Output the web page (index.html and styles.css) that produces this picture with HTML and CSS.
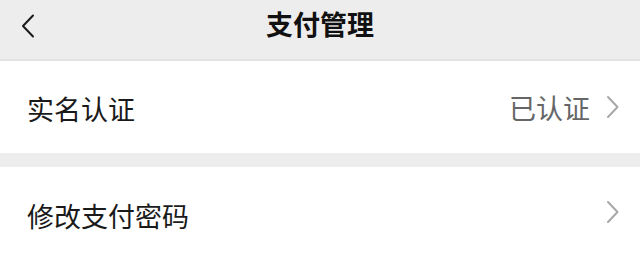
FILE: index.html
```html
<!DOCTYPE html>
<html lang="zh-CN">
<head>
<meta charset="utf-8">
<title>支付管理</title>
<link rel="stylesheet" href="styles.css">
</head>
<body>
<div class="page">
  <header class="nav">
    <span class="back">
      <svg width="14" height="24" viewBox="0 0 14 24"><path d="M12 1.5 L2 12 L12 22.5" fill="none" stroke="#1a1a1a" stroke-width="2" stroke-linecap="round" stroke-linejoin="round"/></svg>
    </span>
    <h1 class="title">支付管理</h1>
  </header>
  <div class="row">
    <span class="label">实名认证</span>
    <span class="right"><span class="value">已认证</span>
      <svg class="chev" width="14" height="24" viewBox="0 0 14 24"><path d="M2 2 L11.5 12 L2 22" fill="none" stroke="#a8a8a8" stroke-width="2" stroke-linecap="round" stroke-linejoin="round"/></svg>
    </span>
  </div>
  <div class="gap"></div>
  <div class="row last">
    <span class="label">修改支付密码</span>
    <span class="right">
      <svg class="chev" width="14" height="24" viewBox="0 0 14 24"><path d="M2 2 L11.5 12 L2 22" fill="none" stroke="#a8a8a8" stroke-width="2" stroke-linecap="round" stroke-linejoin="round"/></svg>
    </span>
  </div>
</div>
</body>
</html>
```
FILE: styles.css
```css
html, body {
  margin: 0;
  padding: 0;
  background: #ededed;
}
body {
  font-family: "Noto Sans CJK SC", "Noto Sans", sans-serif;
  color: #1a1a1a;
  width: 640px;
  height: 256px;
  overflow: hidden;
}
.page {
  display: flex;
  flex-direction: column;
  height: 256px;
}
.nav {
  position: relative;
  height: 61px;
  flex: none;
  box-sizing: border-box;
  padding-top: 10px;
  background: #ededed;
  border-bottom: 2px solid #e3e3e3;
  display: flex;
  align-items: flex-start;
  justify-content: center;
}
.back {
  position: absolute;
  left: 21px;
  top: 14px;
  display: flex;
}
.title {
  margin: 0;
  font-size: 27px;
  font-weight: 700;
  line-height: 1;
  color: #111;
}
.row {
  height: 92px;
  flex: none;
  box-sizing: border-box;
  background: #fff;
  display: flex;
  align-items: center;
  justify-content: space-between;
  padding: 0 20px 0 27px;
}
.row.last {
  flex: 1;
  align-items: flex-start;
  padding-top: 33px;
}
.label {
  font-size: 27px;
  line-height: 1;
  color: #1a1a1a;
  margin-top: 2px;
}
.right {
  display: flex;
  align-items: center;
  gap: 16px;
}
.value {
  font-size: 27px;
  line-height: 1;
  color: #666;
}
.chev {
  display: block;
}
.gap {
  height: 14px;
  flex: none;
  background: #ededed;
}
```
